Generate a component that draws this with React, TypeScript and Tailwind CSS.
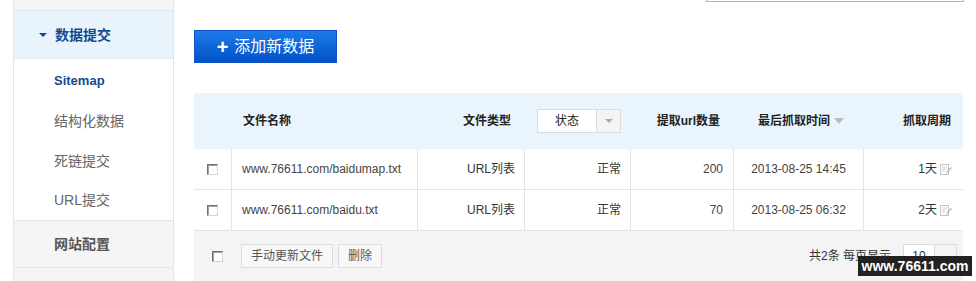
const font = { fontFamily: '"Liberation Sans", Arial, "Noto Sans CJK SC", sans-serif' };

function Checkbox() {
  return <span className="block size-[11px] border border-[#707070] border-r-[#d4d4d4] border-b-[#d4d4d4] bg-white shadow-[inset_1px_1px_0_#a0a0a0]" />;
}

function EditIcon() {
  return (
    <svg width="12" height="13" viewBox="0 0 12 13" className="ml-[3px]">
      <rect x="0.5" y="1.5" width="8" height="10" fill="none" stroke="#c4c4c4" />
      <path d="M2 4h5M2 6h4M2 8h3" stroke="#cfcfcf" />
      <path d="M6 11l1-3 4-4 1 1-4 4z" fill="#b8b8b8" />
    </svg>
  );
}

const rows = [
  { url: "www.76611.com/baidumap.txt", count: "200", time: "2013-08-25 14:45", cycle: "1天" },
  { url: "www.76611.com/baidu.txt", count: "70", time: "2013-08-25 06:32", cycle: "2天" },
];

export default function App() {
  return (
    <div className="relative flex h-[281px] w-[976px] overflow-hidden bg-white" style={font}>
      {/* sidebar */}
      <div className="ml-[13px] flex w-[161px] flex-col border-x border-[#e6e6e6] bg-[#f5f5f5]">
        <div className="h-[11px] border-b border-[#e6e6e6]" />
        <div className="flex h-[48px] items-center border-b border-[#e3ecf4] bg-[#e9f3fc] pl-[25px] pt-[1px] text-[14px] font-bold text-[#124b8c]">
          <span className="mr-[8px] h-0 w-0 border-x-[4px] border-t-[4px] border-x-transparent border-t-[#124b8c]" />
          数据提交
        </div>
        <div className="bg-white pt-[2px]">
          <div className="flex h-[40px] items-center pl-[40px] text-[13px] font-bold text-[#124b8c]">Sitemap</div>
          <div className="flex h-[40px] items-center pl-[40px] text-[14px] text-[#666]">结构化数据</div>
          <div className="flex h-[40px] items-center pl-[40px] text-[14px] text-[#666]">死链提交</div>
          <div className="flex h-[39px] items-center pl-[40px] text-[14px] text-[#666]">URL提交</div>
        </div>
        <div className="flex h-[48px] items-center border-y border-[#e6e6e6] pl-[40px] text-[14px] font-bold text-[#555]">网站配置</div>
      </div>

      {/* main */}
      <div className="ml-[20px] flex w-[769px] flex-col">
        <div className="absolute left-[706px] top-[-10px] h-[12px] w-[258px] border-x border-b border-[#b4b4b4]" />
        <button className="mt-[30px] flex h-[34px] w-[143px] items-center justify-center gap-[6px] border border-[#0b55c4] bg-gradient-to-b from-[#1e7ae8] to-[#0351c9] pt-[1px] text-[16px] text-white">
          <span className="text-[20px] font-bold leading-none">+</span>
          添加新数据
        </button>

        <div className="mt-[30px] flex flex-col text-[12px] text-[#333]">
          {/* header */}
          <div className="flex h-[56px] items-center bg-[#eaf4fd] font-bold text-[#222]">
            <div className="w-[49px]" />
            <div className="w-[184px]">文件名称</div>
            <div className="w-[84px] text-right">文件类型</div>
            <div className="ml-[26px] flex h-[24px] w-[84px] border border-[#dcdcdc] bg-white font-normal">
              <span className="flex flex-1 items-center justify-center">状态</span>
              <span className="flex w-[24px] items-center justify-center border-l border-[#dcdcdc] bg-[#f4f4f4]">
                <span className="h-0 w-0 border-x-[4px] border-t-[4px] border-x-transparent border-t-[#aaa]" />
              </span>
            </div>
            <div className="w-[99px] text-right">提取url数量</div>
            <div className="ml-[38px] flex w-[100px] items-center gap-[4px]">
              最后抓取时间
              <span className="h-0 w-0 border-x-[5px] border-t-[6px] border-x-transparent border-t-[#bbb]" />
            </div>
            <div className="flex-1 pr-[12px] text-right">抓取周期</div>
          </div>

          {rows.map((r) => (
            <div key={r.url} className="flex h-[41px] items-center border-b border-[#e4e4e4]">
              <div className="flex h-full w-[37px] items-center justify-center"><Checkbox /></div>
              <div className="flex h-full w-[186px] items-center border-l border-[#e4e4e4] pl-[10px] text-[#444]">{r.url}</div>
              <div className="flex h-full w-[107px] items-center justify-end border-l border-[#e4e4e4] pr-[9px]">URL列表</div>
              <div className="flex h-full w-[106px] items-center justify-end border-l border-[#e4e4e4] pr-[9px]">正常</div>
              <div className="flex h-full w-[103px] items-center justify-end border-l border-[#e4e4e4] pr-[10px] text-[#444]">{r.count}</div>
              <div className="flex h-full w-[130px] items-center justify-center border-l border-[#e4e4e4] text-[#444]">{r.time}</div>
              <div className="flex h-full flex-1 items-center justify-end border-l border-[#e4e4e4] pr-[11px]">
                {r.cycle}
                <EditIcon />
              </div>
            </div>
          ))}

          {/* footer */}
          <div className="flex h-[50px] items-center bg-[#f4f4f4]">
            <div className="flex w-[47px] justify-center"><Checkbox /></div>
            <button className="h-[24px] border border-[#dcdcdc] bg-[#f8f8f8] px-[9px] text-[12px] text-[#555]">手动更新文件</button>
            <button className="ml-[5px] h-[24px] border border-[#dcdcdc] bg-[#f8f8f8] px-[9px] text-[12px] text-[#555]">删除</button>
            <span className="ml-auto text-[#333]">共2条 每页显示</span>
            <div className="ml-[12px] mr-[6px] flex h-[24px] w-[54px] border border-[#dcdcdc] bg-white">
              <span className="flex flex-1 items-center justify-center">10</span>
              <span className="w-[22px] border-l border-[#dcdcdc] bg-[#f4f4f4]" />
            </div>
          </div>
        </div>
      </div>

      <div className="absolute left-[858px] top-[256px] flex h-[20px] w-[114px] items-center justify-center bg-[#222] text-[14px] font-bold text-white">
        www.76611.com
      </div>
    </div>
  );
}
